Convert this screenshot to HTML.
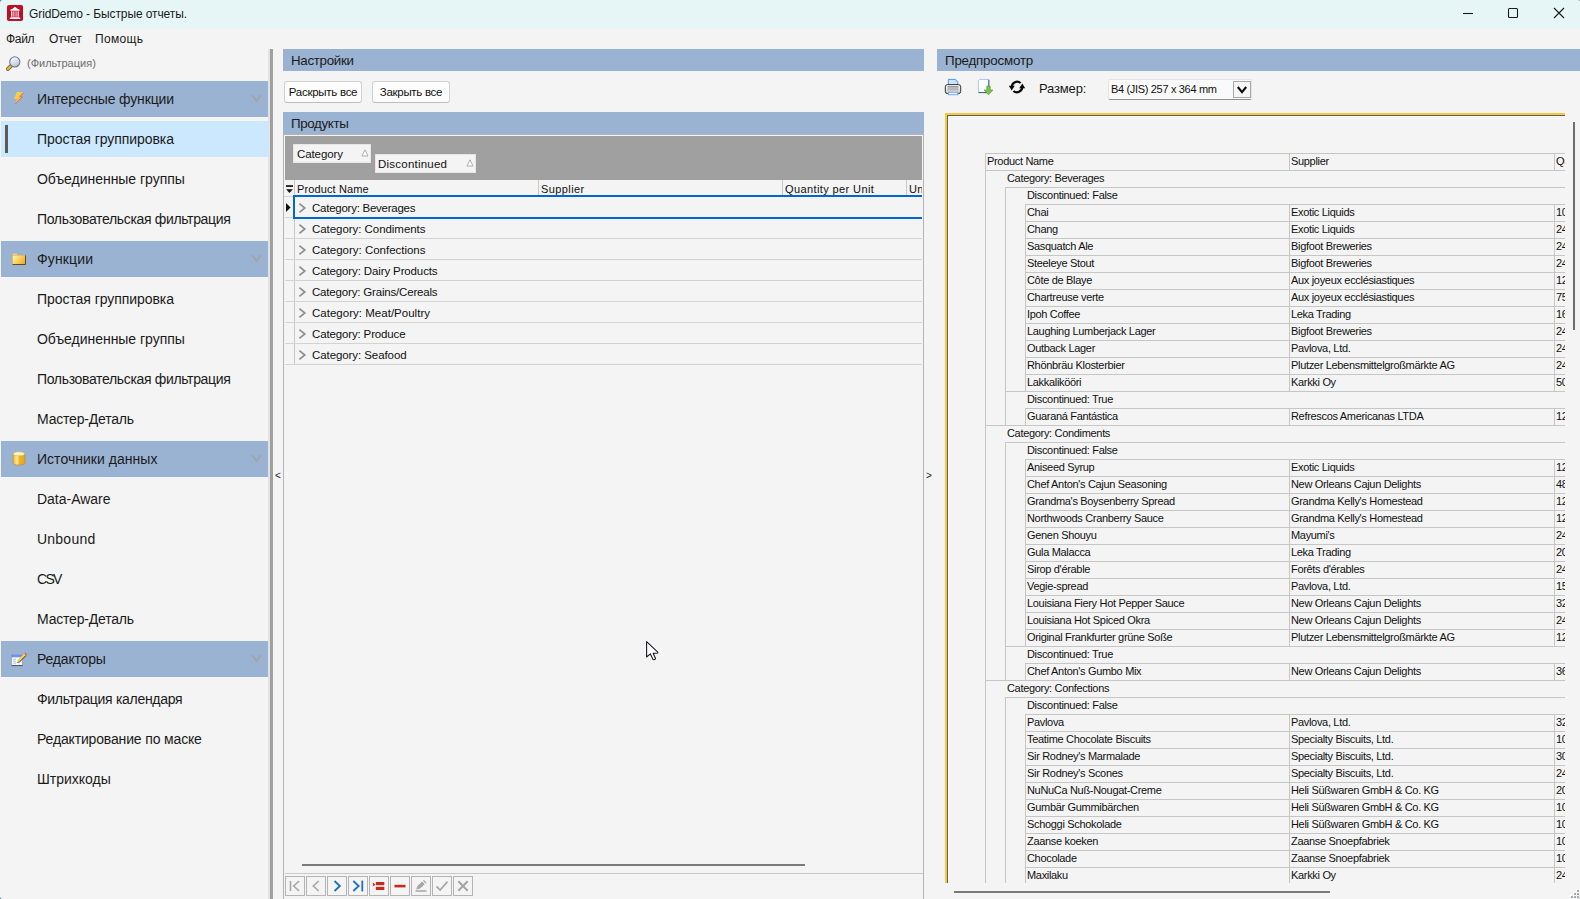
<!DOCTYPE html>
<html lang="ru"><head><meta charset="utf-8"><title>GridDemo - Быстрые отчеты.</title>
<style>
*{box-sizing:border-box;margin:0;padding:0}
html,body{width:1580px;height:899px;overflow:hidden;background:#f4f4f4}
body{font-family:"Liberation Sans",sans-serif;font-size:12px;color:#111;position:relative}
.abs{position:absolute}
.t{position:absolute;white-space:nowrap;line-height:1}
#titlebar{position:absolute;left:0;top:0;width:1580px;height:28px;background:#e6f6f6}
#titlefade{position:absolute;left:0;top:28px;width:1580px;height:1px;background:#eaf5f5}
.hdr{position:absolute;background:#9ab3d2;height:22px}
.hdr span{position:absolute;left:8px;top:4px;font-size:13.33px;line-height:15px;white-space:nowrap;color:#1a1a1a}
  .gh{position:absolute;left:1px;width:267px;height:36px;background:#9ab3d2}
.gh .lbl{position:absolute;left:36px;top:9px;font-size:14px;line-height:18px;white-space:nowrap;color:#1a1a1a}
.gh svg.chev{position:absolute;left:250px;top:13px}
.gh svg.ic{position:absolute;left:9px;top:6px}
.ni{position:absolute;left:37px;font-size:14px;line-height:18px;white-space:nowrap;color:#1a1a1a}
.btn{position:absolute;top:81px;height:22px;border:1px solid #d0d0d0;border-bottom-color:#bcbcbc;border-radius:3px;background:#fdfdfd;font-size:11.5px;line-height:20px;text-align:center;white-space:nowrap}
.grow{position:absolute;left:294px;width:628px;height:21px;border-bottom:1px solid #d3d3d3}
.grow span{position:absolute;left:18px;top:4px;font-size:11.5px;line-height:14px;white-space:nowrap;letter-spacing:-0.27px}
.grow svg{position:absolute;left:4px;top:6px}
.colh{position:absolute;top:182px;height:14px;font-size:11px;line-height:14px;white-space:nowrap;letter-spacing:0.05px}
.nb{position:absolute;top:876px;width:20px;height:20px;border:1px solid #b4b4b4;background:#f4f4f4}
.nb svg{position:absolute;left:0;top:0}
#page{position:absolute;left:948px;top:116px;width:617px;height:767px;overflow:hidden}
.pl{position:absolute;background:#c6c6c6}
.pt{position:absolute;font-size:11px;line-height:13px;white-space:nowrap;letter-spacing:-0.32px;color:#111}
</style></head><body>

<div id="titlebar"></div><div id="titlefade"></div>
<svg class="abs" style="left:7px;top:5px" width="16" height="16" viewBox="0 0 16 16"><rect x="0" y="0" width="16" height="16" rx="1.8" fill="#c30d23"/><g fill="#fff"><path d="M3.1 5.7 L3.9 4.2 Q6 3.9 6.5 3.1 Q8 0.9 9.5 3.1 Q10 3.9 12.1 4.2 L12.9 5.7 Z"/><rect x="4.1" y="6.3" width="1.3" height="5.3"/><rect x="6.3" y="6.3" width="1.1" height="5.3" opacity="0.85"/><rect x="8.5" y="6.3" width="1.1" height="5.3" opacity="0.85"/><rect x="10.6" y="6.3" width="1.3" height="5.3"/><rect x="3.5" y="11.9" width="9" height="0.9"/><rect x="2.7" y="12.9" width="10.6" height="1.1"/></g></svg>
<div class="t" style="left:29px;top:7px;font-size:12px;line-height:14px;letter-spacing:-0.1px;color:#1a1a1a">GridDemo - Быстрые отчеты.</div>
<svg class="abs" style="left:1455px;top:0" width="125" height="28" viewBox="0 0 125 28"><g stroke="#1a1a1a" stroke-width="1.1" fill="none"><path d="M8 13.5 H18"/><rect x="53.5" y="8.5" width="9" height="9" rx="1"/><path d="M99 8 L109 18 M109 8 L99 18"/></g></svg>
<div class="t" style="left:6px;top:32px;font-size:12px;line-height:14px;letter-spacing:-0.3px;color:#1a1a1a">Файл</div>
<div class="t" style="left:49px;top:32px;font-size:12px;line-height:14px;letter-spacing:0px;color:#1a1a1a">Отчет</div>
<div class="t" style="left:95px;top:32px;font-size:12px;line-height:14px;letter-spacing:0.35px;color:#1a1a1a">Помощь</div>
<svg class="abs" style="left:5px;top:55px" width="17" height="17" viewBox="0 0 17 17"><defs><linearGradient id="gl" x1="0.2" y1="0" x2="0.8" y2="1"><stop offset="0" stop-color="#fbfdff"/><stop offset="0.5" stop-color="#d6e0ee"/><stop offset="1" stop-color="#aebdd2"/></linearGradient></defs><path d="M2.9 13.9 L5.8 11.1" stroke="#6b4e16" stroke-width="3.8" stroke-linecap="round"/><path d="M2.9 13.9 L5.8 11.1" stroke="#e3b54a" stroke-width="2.4" stroke-linecap="round"/><circle cx="9.8" cy="6.9" r="5.1" fill="url(#gl)" stroke="#6f7a8a" stroke-width="1.1"/></svg>
<div class="t" style="left:27px;top:57px;font-size:11px;line-height:13px;color:#6d6d6d">(Фильтрация)</div>
<div class="gh" style="top:81px"><svg class="ic" width="18" height="22" viewBox="10 6 18 22"><defs><linearGradient id="gb" x1="0" y1="0" x2="1" y2="1"><stop offset="0" stop-color="#ffe45c"/><stop offset="0.6" stop-color="#f9b92e"/><stop offset="1" stop-color="#f08a1c"/></linearGradient></defs><path d="M17.2 11 L24 11.3 L19.9 15.5 L22.2 16 L15.3 23 L17 18.3 L14 17.6 Z" fill="url(#gb)"/><path d="M24 11.3 L19.9 15.5 L22.2 16 L15.3 23" fill="none" stroke="#e0584a" stroke-width="0.8"/></svg><span class="lbl" style="letter-spacing:-0.163px">Интересные функции</span><svg class="chev" width="12" height="9" viewBox="0 0 12 9"><path d="M1.3 1.3 L5.6 6.9 L9.9 1.3" stroke="#a3a3a3" stroke-width="1.7" fill="none"/></svg></div>
<div class="abs" style="left:1px;top:121px;width:267px;height:36px;background:#cce8ff"></div>
<div class="abs" style="left:5px;top:125px;width:3px;height:28px;background:#5a5a5a"></div>
<div class="ni" style="top:130px;letter-spacing:-0.061px">Простая группировка</div>
<div class="ni" style="top:170px;letter-spacing:-0.03px">Объединенные группы</div>
<div class="ni" style="top:210px;letter-spacing:-0.341px">Пользовательская фильтрация</div>
<div class="gh" style="top:241px"><svg class="ic" width="18" height="22" viewBox="10 6 18 22"><defs><linearGradient id="gf" x1="0" y1="0" x2="1" y2="0.6"><stop offset="0" stop-color="#fff7b5"/><stop offset="0.55" stop-color="#f7d266"/><stop offset="1" stop-color="#eeb02c"/></linearGradient></defs><path d="M12.3 12.4 H17 L17.6 14 H12.3 Z" fill="#fbeeb0" stroke="#c9a66b" stroke-width="0.5"/><rect x="12.3" y="14.1" width="13.4" height="9.6" fill="url(#gf)"/><path d="M12.3 23.5 H25.5 V14.3" fill="none" stroke="#5b3a1a" stroke-width="0.9"/><path d="M12.4 23.5 V14.2 H25.5" fill="none" stroke="#caa25a" stroke-width="0.6"/></svg><span class="lbl" style="letter-spacing:0.155px">Функции</span><svg class="chev" width="12" height="9" viewBox="0 0 12 9"><path d="M1.3 1.3 L5.6 6.9 L9.9 1.3" stroke="#a3a3a3" stroke-width="1.7" fill="none"/></svg></div>
<div class="ni" style="top:290px;letter-spacing:-0.061px">Простая группировка</div>
<div class="ni" style="top:330px;letter-spacing:-0.03px">Объединенные группы</div>
<div class="ni" style="top:370px;letter-spacing:-0.341px">Пользовательская фильтрация</div>
<div class="ni" style="top:410px;letter-spacing:-0.192px">Мастер-Деталь</div>
<div class="gh" style="top:441px"><svg class="ic" width="18" height="22" viewBox="10 6 18 22"><defs><linearGradient id="gd" x1="0" y1="0" x2="1" y2="0"><stop offset="0" stop-color="#f3bf2e"/><stop offset="0.35" stop-color="#fbe79a"/><stop offset="0.55" stop-color="#f0b31e"/><stop offset="1" stop-color="#e9a712"/></linearGradient></defs><path d="M13.2 12.7 V22 A5.8 2 0 0 0 24.8 22 V12.7 Z" fill="url(#gd)" stroke="#c08a1a" stroke-width="0.6"/><ellipse cx="19" cy="12.8" rx="5.8" ry="2" fill="#fff6cf" stroke="#d9b04a" stroke-width="0.6"/></svg><span class="lbl" style="letter-spacing:0.029px">Источники данных</span><svg class="chev" width="12" height="9" viewBox="0 0 12 9"><path d="M1.3 1.3 L5.6 6.9 L9.9 1.3" stroke="#a3a3a3" stroke-width="1.7" fill="none"/></svg></div>
<div class="ni" style="top:490px;letter-spacing:-0.019px">Data-Aware</div>
<div class="ni" style="top:530px;letter-spacing:0.229px">Unbound</div>
<div class="ni" style="top:570px;letter-spacing:-1.698px">CSV</div>
<div class="ni" style="top:610px;letter-spacing:-0.192px">Мастер-Деталь</div>
<div class="gh" style="top:641px"><svg class="ic" width="18" height="22" viewBox="10 6 18 22"><rect x="11.5" y="14" width="11" height="10.4" fill="#fbfcff" stroke="#7e8fb5" stroke-width="0.6"/><rect x="11.3" y="13.9" width="11.4" height="2.4" fill="#6f8ff0"/><path d="M11.6 24.6 H22.8" stroke="#3c4a6a" stroke-width="0.9"/><path d="M13.2 18.2 H16 M13.2 20.2 H16 M13.2 22.2 H16" stroke="#9db4ea" stroke-width="0.9"/><path d="M17 21.6 L17.6 19 L24.4 12.6 L26.2 14.4 L19.4 21 Z" fill="#f7d04a"/><path d="M17 21.6 L19.4 21 L26.2 14.4" fill="none" stroke="#222" stroke-width="0.9"/><path d="M24.4 12.6 L25.6 11.6 L27.2 13.2 L26.2 14.4 Z" fill="#e0604a"/><path d="M17 21.6 L17.5 19.8 L18.6 21.2 Z" fill="#fff"/></svg><span class="lbl" style="letter-spacing:-0.179px">Редакторы</span><svg class="chev" width="12" height="9" viewBox="0 0 12 9"><path d="M1.3 1.3 L5.6 6.9 L9.9 1.3" stroke="#a3a3a3" stroke-width="1.7" fill="none"/></svg></div>
<div class="ni" style="top:690px;letter-spacing:-0.295px">Фильтрация календаря</div>
<div class="ni" style="top:730px;letter-spacing:-0.154px">Редактирование по маске</div>
<div class="ni" style="top:770px;letter-spacing:-0.005px">Штрихкоды</div>
<div class="abs" style="left:268px;top:49px;width:2px;height:850px;background:#e2e2e2"></div>
<div class="abs" style="left:270px;top:49px;width:3px;height:850px;background:#a0a0a0"></div>
<div class="t" style="left:275px;top:470px;font-size:10px;line-height:12px;color:#222">&lt;</div>
<div class="t" style="left:926px;top:470px;font-size:10px;line-height:12px;color:#222">&gt;</div>
<div class="hdr" style="left:283px;top:49px;width:641px"><span style="letter-spacing:-0.3px">Настройки</span></div>
<div class="btn" style="left:284px;width:78px;letter-spacing:-0.27px">Раскрыть все</div>
<div class="btn" style="left:372px;width:78px;letter-spacing:-0.3px">Закрыть все</div>
<div class="hdr" style="left:283px;top:112px;width:641px"><span style="letter-spacing:-0.35px">Продукты</span></div>
<div class="abs" style="left:283px;top:134px;width:1px;height:765px;background:#b4b4b4"></div>
<div class="abs" style="left:923px;top:134px;width:1px;height:765px;background:#b4b4b4"></div>
<div class="abs" style="left:283px;top:134px;width:641px;height:1px;background:#b4b4b4"></div>
<div class="abs" style="left:285px;top:136px;width:637px;height:44px;background:#a0a0a0"></div>
<div class="abs" style="left:293px;top:144px;width:78px;height:19px;background:#f4f4f4;border:1px solid #e6e6e6"><span class="t" style="left:3px;top:2px;font-size:11.5px;line-height:14px;letter-spacing:-0.096px">Category</span><svg class="abs" style="right:1px;top:4px" width="8" height="8" viewBox="0 0 8 8"><path d="M4 0.8 L7 7 H1 Z" fill="#fff" stroke="#9a9a9a" stroke-width="0.8"/></svg></div>
<div class="abs" style="left:375px;top:154px;width:101px;height:19px;background:#f4f4f4;border:1px solid #e6e6e6"><span class="t" style="left:2px;top:2px;font-size:11.5px;line-height:14px;letter-spacing:0.229px">Discontinued</span><svg class="abs" style="right:1px;top:4px" width="8" height="8" viewBox="0 0 8 8"><path d="M4 0.8 L7 7 H1 Z" fill="#fff" stroke="#9a9a9a" stroke-width="0.8"/></svg></div>
<svg class="abs" style="left:286px;top:185px" width="7" height="9" viewBox="0 0 7 9"><rect x="0" y="0.2" width="7" height="1.7" fill="#111"/><path d="M0.1 4.2 H6.9 L3.5 8 Z" fill="#111"/></svg>
<div class="colh" style="left:297px;letter-spacing:0.117px">Product Name</div>
<div class="colh" style="left:541px;letter-spacing:0.406px">Supplier</div>
<div class="colh" style="left:785px;letter-spacing:0.391px">Quantity per Unit</div>
<div class="abs" style="left:909px;top:182px;width:13px;height:14px;overflow:hidden"><div class="colh" style="left:0;top:0;letter-spacing:0.3px">Unit Price</div></div>
<div class="abs" style="left:294px;top:180px;width:1px;height:16px;background:#c8c8c8"></div>
<div class="abs" style="left:538px;top:180px;width:1px;height:16px;background:#c8c8c8"></div>
<div class="abs" style="left:782px;top:180px;width:1px;height:16px;background:#c8c8c8"></div>
<div class="abs" style="left:906px;top:180px;width:1px;height:16px;background:#c8c8c8"></div>
<div class="abs" style="left:294px;top:196px;width:1px;height:169px;background:#c8c8c8"></div>
<div class="abs" style="left:284px;top:196px;width:638px;height:1px;background:#d3d3d3"></div>
<div class="grow" style="top:197px"><svg width="9" height="10" viewBox="0 0 9 10"><path d="M1.4 0.7 L6.8 5 L1.4 9.3" stroke="#8f8f8f" stroke-width="1.7" fill="none"/></svg><span style="letter-spacing:-0.253px">Category: Beverages</span></div>
<div class="abs" style="left:285px;top:217px;width:9px;height:1px;background:#d3d3d3"></div>
<div class="grow" style="top:218px"><svg width="9" height="10" viewBox="0 0 9 10"><path d="M1.4 0.7 L6.8 5 L1.4 9.3" stroke="#8f8f8f" stroke-width="1.7" fill="none"/></svg><span style="letter-spacing:-0.049px">Category: Condiments</span></div>
<div class="abs" style="left:285px;top:238px;width:9px;height:1px;background:#d3d3d3"></div>
<div class="grow" style="top:239px"><svg width="9" height="10" viewBox="0 0 9 10"><path d="M1.4 0.7 L6.8 5 L1.4 9.3" stroke="#8f8f8f" stroke-width="1.7" fill="none"/></svg><span style="letter-spacing:-0.015px">Category: Confections</span></div>
<div class="abs" style="left:285px;top:259px;width:9px;height:1px;background:#d3d3d3"></div>
<div class="grow" style="top:260px"><svg width="9" height="10" viewBox="0 0 9 10"><path d="M1.4 0.7 L6.8 5 L1.4 9.3" stroke="#8f8f8f" stroke-width="1.7" fill="none"/></svg><span style="letter-spacing:-0.125px">Category: Dairy Products</span></div>
<div class="abs" style="left:285px;top:280px;width:9px;height:1px;background:#d3d3d3"></div>
<div class="grow" style="top:281px"><svg width="9" height="10" viewBox="0 0 9 10"><path d="M1.4 0.7 L6.8 5 L1.4 9.3" stroke="#8f8f8f" stroke-width="1.7" fill="none"/></svg><span style="letter-spacing:-0.18px">Category: Grains/Cereals</span></div>
<div class="abs" style="left:285px;top:301px;width:9px;height:1px;background:#d3d3d3"></div>
<div class="grow" style="top:302px"><svg width="9" height="10" viewBox="0 0 9 10"><path d="M1.4 0.7 L6.8 5 L1.4 9.3" stroke="#8f8f8f" stroke-width="1.7" fill="none"/></svg><span style="letter-spacing:0.019px">Category: Meat/Poultry</span></div>
<div class="abs" style="left:285px;top:322px;width:9px;height:1px;background:#d3d3d3"></div>
<div class="grow" style="top:323px"><svg width="9" height="10" viewBox="0 0 9 10"><path d="M1.4 0.7 L6.8 5 L1.4 9.3" stroke="#8f8f8f" stroke-width="1.7" fill="none"/></svg><span style="letter-spacing:-0.143px">Category: Produce</span></div>
<div class="abs" style="left:285px;top:343px;width:9px;height:1px;background:#d3d3d3"></div>
<div class="grow" style="top:344px"><svg width="9" height="10" viewBox="0 0 9 10"><path d="M1.4 0.7 L6.8 5 L1.4 9.3" stroke="#8f8f8f" stroke-width="1.7" fill="none"/></svg><span style="letter-spacing:-0.082px">Category: Seafood</span></div>
<div class="abs" style="left:285px;top:364px;width:9px;height:1px;background:#d3d3d3"></div>
<div class="abs" style="left:293px;top:195px;width:629px;height:24px;border:2px solid #0067cd;border-right:none"></div>
<svg class="abs" style="left:286px;top:203px" width="5" height="9" viewBox="0 0 5 9"><path d="M0 0 L4.6 4.5 L0 9 Z" fill="#111"/></svg>
<div class="abs" style="left:302px;top:864px;width:503px;height:2px;background:#7a7a7a"></div>
<div class="abs" style="left:285px;top:873px;width:638px;height:1px;background:#c8c8c8"></div>
<div class="nb" style="left:285px"><svg width="18" height="18" viewBox="0.5 1 18 18"><path d="M5 5 V15" stroke="#a6a6a6" stroke-width="1.6"/><path d="M13.6 5 L8.2 10 L13.6 15" stroke="#a6a6a6" stroke-width="1.6" fill="none"/></svg></div>
<div class="nb" style="left:306px"><svg width="18" height="18" viewBox="0.5 1 18 18"><path d="M12.2 5 L6.8 10 L12.2 15" stroke="#a6a6a6" stroke-width="1.6" fill="none"/></svg></div>
<div class="nb" style="left:327px"><svg width="18" height="18" viewBox="0.5 1 18 18"><path d="M7 5 L12.4 10 L7 15" stroke="#1e6fc0" stroke-width="1.8" fill="none"/></svg></div>
<div class="nb" style="left:348px"><svg width="18" height="18" viewBox="0.5 1 18 18"><path d="M4.8 5 L10.2 10 L4.8 15" stroke="#1e6fc0" stroke-width="1.8" fill="none"/><path d="M13.8 4.6 V15.4" stroke="#1e6fc0" stroke-width="1.8"/></svg></div>
<div class="nb" style="left:369px"><svg width="18" height="18" viewBox="0.5 1 18 18"><path d="M3.4 6.6 L6 8.6 L3.4 10.6 Z" fill="#c42b1c"/><rect x="6.4" y="6" width="8.4" height="3.2" fill="#c42b1c"/><rect x="6.4" y="10.8" width="8.4" height="3.2" fill="#c42b1c"/></svg></div>
<div class="nb" style="left:390px"><svg width="18" height="18" viewBox="0.5 1 18 18"><rect x="4" y="8.8" width="11" height="2.6" fill="#c42b1c"/></svg></div>
<div class="nb" style="left:411px"><svg width="18" height="18" viewBox="0.5 1 18 18"><path d="M4.6 13.6 L6 10 L10.6 5.6 L13.2 8.2 L8.6 12.6 Z" fill="#a6a6a6"/><path d="M11.4 4.8 L12.4 3.9 L15 6.5 L14 7.4 Z" fill="#a6a6a6"/><rect x="4" y="14.2" width="11" height="1.5" fill="#a6a6a6"/></svg></div>
<div class="nb" style="left:432px"><svg width="18" height="18" viewBox="0.5 1 18 18"><path d="M4 10.4 L7.6 14 L15 5.6" stroke="#a6a6a6" stroke-width="1.7" fill="none"/></svg></div>
<div class="nb" style="left:453px"><svg width="18" height="18" viewBox="0.5 1 18 18"><path d="M4.8 5.2 L14.2 14.8 M14.2 5.2 L4.8 14.8" stroke="#a6a6a6" stroke-width="2.1"/></svg></div>
<div class="hdr" style="left:937px;top:49px;width:643px"><span style="letter-spacing:-0.2px">Предпросмотр</span></div>
<svg class="abs" style="left:943px;top:77px" width="20" height="20" viewBox="943 77 20 20"><defs><linearGradient id="gp" x1="0" y1="0" x2="0" y2="1"><stop offset="0" stop-color="#ffffff"/><stop offset="1" stop-color="#c9c9c9"/></linearGradient></defs><path d="M948.4 86 V79.4 H955.6 L957.8 81.6 V86 Z" fill="#cfe2fa" stroke="#3c8fe0" stroke-width="0.9"/><path d="M955.2 79.6 L957.6 82 H955.2 Z" fill="#a9c8f0"/><rect x="945.3" y="84.6" width="15.4" height="9" rx="2.2" fill="url(#gp)" stroke="#1c1c1c" stroke-width="0.9"/><rect x="947.6" y="87.6" width="10.8" height="3" fill="#b9b9b9"/><path d="M947.4 86.8 H958.6" stroke="#555" stroke-width="0.8"/><rect x="948.4" y="92.2" width="9.4" height="2.6" fill="#e6f0fc" stroke="#5aa0e6" stroke-width="0.8"/></svg>
<svg class="abs" style="left:976px;top:77px" width="20" height="20" viewBox="976 77 20 20"><path d="M978.4 80.6 L979.8 79.4 H988.8 V92.6 H978.4 Z" fill="#fdfeff" stroke="#9fb6da" stroke-width="0.8"/><path d="M978.6 92.6 H988.8 V79.8" fill="none" stroke="#2d5078" stroke-width="0.9"/><path d="M986.8 86 H990.2 V90 H993 L988.5 94.8 L984 90 H986.8 Z" fill="#7cc04e" stroke="#4d9a2a" stroke-width="0.6"/></svg>
<svg class="abs" style="left:1007px;top:77px" width="20" height="20" viewBox="1007 77 20 20"><g fill="none" stroke="#0a0a0a" stroke-width="2.2"><path d="M1020.6 83 A5.3 5.3 0 0 0 1011.8 87"/><path d="M1013.4 91 A5.3 5.3 0 0 0 1022.2 87"/></g><path d="M1008.8 85.8 H1014.8 L1011.7 90.4 Z" fill="#0a0a0a"/><path d="M1019.2 88.2 H1025.2 L1022.3 83.6 Z" fill="#0a0a0a"/></svg>
<div class="t" style="left:1039px;top:81px;font-size:13px;line-height:15px;letter-spacing:-0.15px;color:#1a1a1a">Размер:</div>
<div class="abs" style="left:1108px;top:79px;width:144px;height:21px;background:#fafafa;border:1px solid #e4e4e4;border-bottom-color:#8e8e8e;border-radius:2px"></div>
<div class="t" style="left:1111px;top:83px;font-size:11px;line-height:13px;letter-spacing:-0.33px;color:#111">B4 (JIS) 257 x 364 mm</div>
<div class="abs" style="left:1233px;top:81px;width:18px;height:17px;background:#f6f6f6;border:1px solid #a8a8a8"></div>
<svg class="abs" style="left:1237px;top:86px" width="10" height="8" viewBox="0 0 10 8"><path d="M0.8 1 L5 6.2 L9.2 1" stroke="#0a0a0a" stroke-width="2.1" fill="none"/></svg>
<div class="abs" style="left:945px;top:113px;width:620px;height:2px;background:#ffc733"></div>
<div class="abs" style="left:945px;top:113px;width:2px;height:770px;background:#ffc733"></div>
<div class="abs" style="left:947px;top:115px;width:618px;height:1px;background:#5b5d6b"></div>
<div class="abs" style="left:947px;top:115px;width:1px;height:768px;background:#5b5d6b"></div>
<div class="abs" style="left:948px;top:116px;width:617px;height:1px;background:#ffffff"></div>
<div class="abs" style="left:948px;top:116px;width:1px;height:767px;background:#ffffff"></div>
<div class="abs" style="left:1573px;top:122px;width:2px;height:208px;background:#6e6e6e"></div>
<div class="abs" style="left:954px;top:891px;width:376px;height:2px;background:#7a7a7a"></div>
<svg class="abs" style="left:1568px;top:887px" width="12" height="12" viewBox="1568 887 12 12"><rect x="1576" y="889" width="2" height="2" fill="#ffffff"/><rect x="1577" y="890" width="2" height="2" fill="#a8a8a8"/><rect x="1573" y="892" width="2" height="2" fill="#ffffff"/><rect x="1574" y="893" width="2" height="2" fill="#a8a8a8"/><rect x="1576" y="892" width="2" height="2" fill="#ffffff"/><rect x="1577" y="893" width="2" height="2" fill="#a8a8a8"/><rect x="1570" y="895" width="2" height="2" fill="#ffffff"/><rect x="1571" y="896" width="2" height="2" fill="#a8a8a8"/><rect x="1573" y="895" width="2" height="2" fill="#ffffff"/><rect x="1574" y="896" width="2" height="2" fill="#a8a8a8"/><rect x="1576" y="895" width="2" height="2" fill="#ffffff"/><rect x="1577" y="896" width="2" height="2" fill="#a8a8a8"/></svg>
<svg class="abs" style="left:1577px;top:0" width="3" height="3" viewBox="0 0 3 3"><path d="M3 0 H1.2 A1.8 1.8 0 0 1 3 1.8 Z" fill="#4f8a8a"/></svg>
<svg class="abs" style="left:0;top:0" width="3" height="3" viewBox="0 0 3 3"><path d="M0 0 H2.4 A2.4 2.4 0 0 0 0 2.4 Z" fill="#2f6272"/></svg>
<svg class="abs" style="left:0;top:896px" width="3" height="3" viewBox="0 0 3 3"><path d="M0 3 H2.2 A2.2 2.2 0 0 1 0 0.8 Z" fill="#2f6272"/></svg>
<svg class="abs" style="left:1577px;top:896px" width="3" height="3" viewBox="0 0 3 3"><path d="M3 3 H1.4 A1.6 1.6 0 0 0 3 1.4 Z" fill="#4f8a8a"/></svg>
<div id="page">
<div class="pl" style="left:37px;top:37px;width:615px;height:1px"></div>
<div class="pl" style="left:37px;top:37px;width:1px;height:900px"></div>
<div class="pl" style="left:341px;top:37px;width:1px;height:17px"></div>
<div class="pl" style="left:606px;top:37px;width:1px;height:17px"></div>
<div class="pt" style="left:39px;top:39px">Product Name</div>
<div class="pt" style="left:343px;top:39px">Supplier</div>
<div class="pt" style="left:608px;top:39px">Quantity per Unit</div>
<div class="pl" style="left:37px;top:54px;width:615px;height:1px"></div>
<div class="pt" style="left:59px;top:56px">Category: Beverages</div>
<div class="pl" style="left:57px;top:71px;width:595px;height:1px"></div>
<div class="pt" style="left:79px;top:73px">Discontinued: False</div>
<div class="pl" style="left:77px;top:88px;width:575px;height:1px"></div>
<div class="pt" style="left:79px;top:90px">Chai</div>
<div class="pt" style="left:343px;top:90px">Exotic Liquids</div>
<div class="pt" style="left:608px;top:90px">10 boxes x 20 bags</div>
<div class="pl" style="left:77px;top:105px;width:575px;height:1px"></div>
<div class="pt" style="left:79px;top:107px">Chang</div>
<div class="pt" style="left:343px;top:107px">Exotic Liquids</div>
<div class="pt" style="left:608px;top:107px">24 - 12 oz bottles</div>
<div class="pl" style="left:77px;top:122px;width:575px;height:1px"></div>
<div class="pt" style="left:79px;top:124px">Sasquatch Ale</div>
<div class="pt" style="left:343px;top:124px">Bigfoot Breweries</div>
<div class="pt" style="left:608px;top:124px">24 - 12 oz bottles</div>
<div class="pl" style="left:77px;top:139px;width:575px;height:1px"></div>
<div class="pt" style="left:79px;top:141px">Steeleye Stout</div>
<div class="pt" style="left:343px;top:141px">Bigfoot Breweries</div>
<div class="pt" style="left:608px;top:141px">24 - 12 oz bottles</div>
<div class="pl" style="left:77px;top:156px;width:575px;height:1px"></div>
<div class="pt" style="left:79px;top:158px">Côte de Blaye</div>
<div class="pt" style="left:343px;top:158px">Aux joyeux ecclésiastiques</div>
<div class="pt" style="left:608px;top:158px">12 - 75 cl bottles</div>
<div class="pl" style="left:77px;top:173px;width:575px;height:1px"></div>
<div class="pt" style="left:79px;top:175px">Chartreuse verte</div>
<div class="pt" style="left:343px;top:175px">Aux joyeux ecclésiastiques</div>
<div class="pt" style="left:608px;top:175px">750 cc per bottle</div>
<div class="pl" style="left:77px;top:190px;width:575px;height:1px"></div>
<div class="pt" style="left:79px;top:192px">Ipoh Coffee</div>
<div class="pt" style="left:343px;top:192px">Leka Trading</div>
<div class="pt" style="left:608px;top:192px">16 - 500 g tins</div>
<div class="pl" style="left:77px;top:207px;width:575px;height:1px"></div>
<div class="pt" style="left:79px;top:209px">Laughing Lumberjack Lager</div>
<div class="pt" style="left:343px;top:209px">Bigfoot Breweries</div>
<div class="pt" style="left:608px;top:209px">24 - 12 oz bottles</div>
<div class="pl" style="left:77px;top:224px;width:575px;height:1px"></div>
<div class="pt" style="left:79px;top:226px">Outback Lager</div>
<div class="pt" style="left:343px;top:226px">Pavlova, Ltd.</div>
<div class="pt" style="left:608px;top:226px">24 - 355 ml bottles</div>
<div class="pl" style="left:77px;top:241px;width:575px;height:1px"></div>
<div class="pt" style="left:79px;top:243px">Rhönbräu Klosterbier</div>
<div class="pt" style="left:343px;top:243px">Plutzer Lebensmittelgroßmärkte AG</div>
<div class="pt" style="left:608px;top:243px">24 - 0.5 l bottles</div>
<div class="pl" style="left:77px;top:258px;width:575px;height:1px"></div>
<div class="pt" style="left:79px;top:260px">Lakkalikööri</div>
<div class="pt" style="left:343px;top:260px">Karkki Oy</div>
<div class="pt" style="left:608px;top:260px">500 ml</div>
<div class="pl" style="left:77px;top:88px;width:1px;height:187px"></div>
<div class="pl" style="left:341px;top:88px;width:1px;height:187px"></div>
<div class="pl" style="left:606px;top:88px;width:1px;height:187px"></div>
<div class="pl" style="left:57px;top:275px;width:595px;height:1px"></div>
<div class="pt" style="left:79px;top:277px">Discontinued: True</div>
<div class="pl" style="left:77px;top:292px;width:575px;height:1px"></div>
<div class="pt" style="left:79px;top:294px">Guaraná Fantástica</div>
<div class="pt" style="left:343px;top:294px">Refrescos Americanas LTDA</div>
<div class="pt" style="left:608px;top:294px">12 - 355 ml cans</div>
<div class="pl" style="left:77px;top:292px;width:1px;height:17px"></div>
<div class="pl" style="left:341px;top:292px;width:1px;height:17px"></div>
<div class="pl" style="left:606px;top:292px;width:1px;height:17px"></div>
<div class="pl" style="left:57px;top:71px;width:1px;height:238px"></div>
<div class="pl" style="left:37px;top:309px;width:615px;height:1px"></div>
<div class="pt" style="left:59px;top:311px">Category: Condiments</div>
<div class="pl" style="left:57px;top:326px;width:595px;height:1px"></div>
<div class="pt" style="left:79px;top:328px">Discontinued: False</div>
<div class="pl" style="left:77px;top:343px;width:575px;height:1px"></div>
<div class="pt" style="left:79px;top:345px">Aniseed Syrup</div>
<div class="pt" style="left:343px;top:345px">Exotic Liquids</div>
<div class="pt" style="left:608px;top:345px">12 - 550 ml bottles</div>
<div class="pl" style="left:77px;top:360px;width:575px;height:1px"></div>
<div class="pt" style="left:79px;top:362px">Chef Anton&#x27;s Cajun Seasoning</div>
<div class="pt" style="left:343px;top:362px">New Orleans Cajun Delights</div>
<div class="pt" style="left:608px;top:362px">48 - 6 oz jars</div>
<div class="pl" style="left:77px;top:377px;width:575px;height:1px"></div>
<div class="pt" style="left:79px;top:379px">Grandma&#x27;s Boysenberry Spread</div>
<div class="pt" style="left:343px;top:379px">Grandma Kelly&#x27;s Homestead</div>
<div class="pt" style="left:608px;top:379px">12 - 8 oz jars</div>
<div class="pl" style="left:77px;top:394px;width:575px;height:1px"></div>
<div class="pt" style="left:79px;top:396px">Northwoods Cranberry Sauce</div>
<div class="pt" style="left:343px;top:396px">Grandma Kelly&#x27;s Homestead</div>
<div class="pt" style="left:608px;top:396px">12 - 12 oz jars</div>
<div class="pl" style="left:77px;top:411px;width:575px;height:1px"></div>
<div class="pt" style="left:79px;top:413px">Genen Shouyu</div>
<div class="pt" style="left:343px;top:413px">Mayumi&#x27;s</div>
<div class="pt" style="left:608px;top:413px">24 - 250 ml bottles</div>
<div class="pl" style="left:77px;top:428px;width:575px;height:1px"></div>
<div class="pt" style="left:79px;top:430px">Gula Malacca</div>
<div class="pt" style="left:343px;top:430px">Leka Trading</div>
<div class="pt" style="left:608px;top:430px">20 - 2 kg bags</div>
<div class="pl" style="left:77px;top:445px;width:575px;height:1px"></div>
<div class="pt" style="left:79px;top:447px">Sirop d&#x27;érable</div>
<div class="pt" style="left:343px;top:447px">Forêts d&#x27;érables</div>
<div class="pt" style="left:608px;top:447px">24 - 500 ml bottles</div>
<div class="pl" style="left:77px;top:462px;width:575px;height:1px"></div>
<div class="pt" style="left:79px;top:464px">Vegie-spread</div>
<div class="pt" style="left:343px;top:464px">Pavlova, Ltd.</div>
<div class="pt" style="left:608px;top:464px">15 - 625 g jars</div>
<div class="pl" style="left:77px;top:479px;width:575px;height:1px"></div>
<div class="pt" style="left:79px;top:481px">Louisiana Fiery Hot Pepper Sauce</div>
<div class="pt" style="left:343px;top:481px">New Orleans Cajun Delights</div>
<div class="pt" style="left:608px;top:481px">32 - 8 oz bottles</div>
<div class="pl" style="left:77px;top:496px;width:575px;height:1px"></div>
<div class="pt" style="left:79px;top:498px">Louisiana Hot Spiced Okra</div>
<div class="pt" style="left:343px;top:498px">New Orleans Cajun Delights</div>
<div class="pt" style="left:608px;top:498px">24 - 8 oz jars</div>
<div class="pl" style="left:77px;top:513px;width:575px;height:1px"></div>
<div class="pt" style="left:79px;top:515px">Original Frankfurter grüne Soße</div>
<div class="pt" style="left:343px;top:515px">Plutzer Lebensmittelgroßmärkte AG</div>
<div class="pt" style="left:608px;top:515px">12 boxes</div>
<div class="pl" style="left:77px;top:343px;width:1px;height:187px"></div>
<div class="pl" style="left:341px;top:343px;width:1px;height:187px"></div>
<div class="pl" style="left:606px;top:343px;width:1px;height:187px"></div>
<div class="pl" style="left:57px;top:530px;width:595px;height:1px"></div>
<div class="pt" style="left:79px;top:532px">Discontinued: True</div>
<div class="pl" style="left:77px;top:547px;width:575px;height:1px"></div>
<div class="pt" style="left:79px;top:549px">Chef Anton&#x27;s Gumbo Mix</div>
<div class="pt" style="left:343px;top:549px">New Orleans Cajun Delights</div>
<div class="pt" style="left:608px;top:549px">36 boxes</div>
<div class="pl" style="left:77px;top:547px;width:1px;height:17px"></div>
<div class="pl" style="left:341px;top:547px;width:1px;height:17px"></div>
<div class="pl" style="left:606px;top:547px;width:1px;height:17px"></div>
<div class="pl" style="left:57px;top:326px;width:1px;height:238px"></div>
<div class="pl" style="left:37px;top:564px;width:615px;height:1px"></div>
<div class="pt" style="left:59px;top:566px">Category: Confections</div>
<div class="pl" style="left:57px;top:581px;width:595px;height:1px"></div>
<div class="pt" style="left:79px;top:583px">Discontinued: False</div>
<div class="pl" style="left:77px;top:598px;width:575px;height:1px"></div>
<div class="pt" style="left:79px;top:600px">Pavlova</div>
<div class="pt" style="left:343px;top:600px">Pavlova, Ltd.</div>
<div class="pt" style="left:608px;top:600px">32 - 500 g boxes</div>
<div class="pl" style="left:77px;top:615px;width:575px;height:1px"></div>
<div class="pt" style="left:79px;top:617px">Teatime Chocolate Biscuits</div>
<div class="pt" style="left:343px;top:617px">Specialty Biscuits, Ltd.</div>
<div class="pt" style="left:608px;top:617px">10 boxes x 12 pieces</div>
<div class="pl" style="left:77px;top:632px;width:575px;height:1px"></div>
<div class="pt" style="left:79px;top:634px">Sir Rodney&#x27;s Marmalade</div>
<div class="pt" style="left:343px;top:634px">Specialty Biscuits, Ltd.</div>
<div class="pt" style="left:608px;top:634px">30 gift boxes</div>
<div class="pl" style="left:77px;top:649px;width:575px;height:1px"></div>
<div class="pt" style="left:79px;top:651px">Sir Rodney&#x27;s Scones</div>
<div class="pt" style="left:343px;top:651px">Specialty Biscuits, Ltd.</div>
<div class="pt" style="left:608px;top:651px">24 pkgs. x 4 pieces</div>
<div class="pl" style="left:77px;top:666px;width:575px;height:1px"></div>
<div class="pt" style="left:79px;top:668px">NuNuCa Nuß-Nougat-Creme</div>
<div class="pt" style="left:343px;top:668px">Heli Süßwaren GmbH &amp; Co. KG</div>
<div class="pt" style="left:608px;top:668px">20 - 450 g glasses</div>
<div class="pl" style="left:77px;top:683px;width:575px;height:1px"></div>
<div class="pt" style="left:79px;top:685px">Gumbär Gummibärchen</div>
<div class="pt" style="left:343px;top:685px">Heli Süßwaren GmbH &amp; Co. KG</div>
<div class="pt" style="left:608px;top:685px">100 - 250 g bags</div>
<div class="pl" style="left:77px;top:700px;width:575px;height:1px"></div>
<div class="pt" style="left:79px;top:702px">Schoggi Schokolade</div>
<div class="pt" style="left:343px;top:702px">Heli Süßwaren GmbH &amp; Co. KG</div>
<div class="pt" style="left:608px;top:702px">100 - 100 g pieces</div>
<div class="pl" style="left:77px;top:717px;width:575px;height:1px"></div>
<div class="pt" style="left:79px;top:719px">Zaanse koeken</div>
<div class="pt" style="left:343px;top:719px">Zaanse Snoepfabriek</div>
<div class="pt" style="left:608px;top:719px">10 - 4 oz boxes</div>
<div class="pl" style="left:77px;top:734px;width:575px;height:1px"></div>
<div class="pt" style="left:79px;top:736px">Chocolade</div>
<div class="pt" style="left:343px;top:736px">Zaanse Snoepfabriek</div>
<div class="pt" style="left:608px;top:736px">10 pkgs.</div>
<div class="pl" style="left:77px;top:751px;width:575px;height:1px"></div>
<div class="pt" style="left:79px;top:753px">Maxilaku</div>
<div class="pt" style="left:343px;top:753px">Karkki Oy</div>
<div class="pt" style="left:608px;top:753px">24 - 50 g pkgs.</div>
<div class="pl" style="left:77px;top:598px;width:1px;height:170px"></div>
<div class="pl" style="left:341px;top:598px;width:1px;height:170px"></div>
<div class="pl" style="left:606px;top:598px;width:1px;height:170px"></div>
<div class="pl" style="left:57px;top:581px;width:1px;height:187px"></div>
</div>
<svg class="abs" style="left:642px;top:637px" width="22" height="28" viewBox="642 637 22 28"><path d="M646.6 641.6 V657 L650.4 653.9 L653 659.5 Q654.6 660.2 655.6 658.4 L653.2 653.4 L657.8 653 V652.2 Z" fill="#fff" stroke="#fff" stroke-width="2.6" stroke-linejoin="round"/><path d="M646.6 641.6 V657 L650.4 653.9 L653 659.5 Q654.6 660.2 655.6 658.4 L653.2 653.4 L657.8 653 V652.2 Z" fill="#fff" stroke="#17172a" stroke-width="1.1" stroke-linejoin="round"/></svg>
</body></html>
